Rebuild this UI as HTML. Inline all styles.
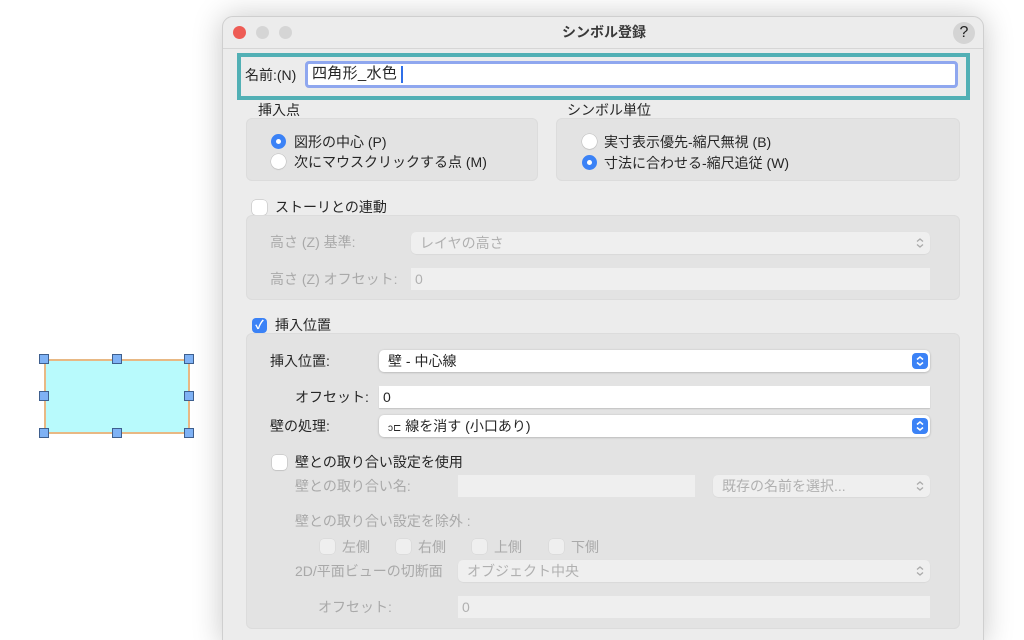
<!DOCTYPE html>
<html><head><meta charset="utf-8"><style>
*{box-sizing:border-box;margin:0;padding:0}
html,body{width:1024px;height:640px;overflow:hidden}
body{background:#fff;position:relative;font-family:"Liberation Sans","Noto Sans CJK JP",sans-serif;font-size:14px;color:#262626}
.a{position:absolute}
.win{left:222px;top:16px;width:762px;height:630px;background:#ececec;border:1px solid #cfcfcf;border-radius:11px 11px 0 0;box-shadow:0 0 30px rgba(0,0,0,.22)}
.t{position:absolute;white-space:nowrap;line-height:16px}
.g{color:#a9a9a9}
.box{position:absolute;background:#e3e3e3;border:1px solid #dcdcdc;border-radius:6px}
.fld{position:absolute;background:#fff;height:22px;box-shadow:0 1px 1px rgba(0,0,0,.15);padding-left:4px;line-height:22px}
.fld.d{background:#efefef;color:#b0b0b0;box-shadow:none}
.pop{position:absolute;background:#fff;height:22px;border-radius:5px;box-shadow:0 0.5px 2px rgba(0,0,0,.25);padding-left:9px;line-height:22px}
.pop.d{background:#efefef;color:#b0b0b0;box-shadow:0 0.5px 1px rgba(0,0,0,.08)}
.stp{position:absolute;right:2px;top:3px;width:16px;height:16px;border-radius:4px;background:#3b82f6}
.dstp{position:absolute;right:2px;top:3px;width:16px;height:16px}
.rad{position:absolute;width:15px;height:15px;border-radius:50%;background:#fff;box-shadow:0 0 0 .5px #bbb,0 1px 1px rgba(0,0,0,.1)}
.rad.on{background:#3b82f6;box-shadow:none}
.rad.on:after{content:"";position:absolute;left:5px;top:5px;width:5px;height:5px;border-radius:50%;background:#fff}
.cb{position:absolute;width:15px;height:15px;border-radius:4px;background:#fff;box-shadow:0 0 0 .5px #bbb,0 1px 1px rgba(0,0,0,.1)}
.cb.d{background:#efefef;box-shadow:0 0 0 .5px #d5d5d5}
.h{position:absolute;width:10px;height:10px;background:#7fb2f5;border:1px solid #3e5f8e}
</style></head><body>
<div class="a" style="left:44px;top:359px;width:146px;height:75px;background:#b8fafc;border:2px solid #e8b884"></div>
<div class="h" style="left:39px;top:354px"></div><div class="h" style="left:112px;top:354px"></div><div class="h" style="left:184px;top:354px"></div>
<div class="h" style="left:39px;top:391px"></div><div class="h" style="left:184px;top:391px"></div>
<div class="h" style="left:39px;top:428px"></div><div class="h" style="left:112px;top:428px"></div><div class="h" style="left:184px;top:428px"></div>

<div class="a win"></div>
<div class="a" style="left:223px;top:48px;width:760px;height:1px;background:#d6d6d6"></div>
<div class="a" style="left:233px;top:26px;width:13px;height:13px;border-radius:50%;background:#ee5c55"></div>
<div class="a" style="left:256px;top:26px;width:13px;height:13px;border-radius:50%;background:#d5d5d5"></div>
<div class="a" style="left:279px;top:26px;width:13px;height:13px;border-radius:50%;background:#d5d5d5"></div>
<div class="t" style="left:562px;top:24px;font-weight:bold;color:#3a3a3a">シンボル登録</div>
<div class="a" style="left:953px;top:22px;width:22px;height:22px;border-radius:50%;background:#d4d4d4;text-align:center;line-height:22px;font-size:16px;color:#222">?</div>

<div class="a" style="left:237px;top:53px;width:733px;height:47px;border:4px solid #52b0b5"></div>
<div class="t" style="left:245px;top:67px">名前:(N)</div>
<div class="a" style="left:305px;top:61px;width:653px;height:27px;border:3px solid #8fa7ef;border-radius:4px;background:#fff"></div>
<div class="t" style="left:312px;top:66px;font-size:15px;letter-spacing:0.3px">四角形_水色</div>
<div class="a" style="left:401px;top:66px;width:2px;height:17px;background:#2f6fe8"></div>

<div class="t" style="left:258px;top:102px">挿入点</div>
<div class="box" style="left:246px;top:118px;width:292px;height:63px"></div>
<div class="rad on" style="left:271px;top:134px"></div><div class="t" style="left:294px;top:134px">図形の中心 (P)</div>
<div class="rad" style="left:271px;top:154px"></div><div class="t" style="left:294px;top:154px">次にマウスクリックする点 (M)</div>
<div class="t" style="left:567px;top:102px">シンボル単位</div>
<div class="box" style="left:556px;top:118px;width:404px;height:63px"></div>
<div class="rad" style="left:582px;top:134px"></div><div class="t" style="left:604px;top:134px">実寸表示優先-縮尺無視 (B)</div>
<div class="rad on" style="left:582px;top:155px"></div><div class="t" style="left:604px;top:155px">寸法に合わせる-縮尺追従 (W)</div>

<div class="cb" style="left:252px;top:200px"></div><div class="t" style="left:275px;top:199px">ストーリとの連動</div>
<div class="box" style="left:246px;top:215px;width:714px;height:85px"></div>
<div class="t g" style="left:270px;top:234px">高さ (Z) 基準:</div>
<div class="pop d" style="left:411px;top:232px;width:519px">レイヤの高さ<svg class="dstp" viewBox="0 0 16 16"><path d="M5 6.5L8 4l3 2.5M5 9.5L8 12l3-2.5" stroke="#aaa" stroke-width="1.3" fill="none"/></svg></div>
<div class="t g" style="left:270px;top:271px">高さ (Z) オフセット:</div>
<div class="fld d" style="left:411px;top:268px;width:519px">0</div>

<div class="cb" style="left:252px;top:318px;background:#3b82f6;box-shadow:none;color:#fff;font-size:12px;text-align:center;line-height:15px;font-weight:bold">✓</div>
<div class="t" style="left:275px;top:317px">挿入位置</div>
<div class="box" style="left:246px;top:333px;width:714px;height:296px"></div>
<div class="t" style="left:270px;top:353px">挿入位置:</div>
<div class="pop" style="left:379px;top:350px;width:551px">壁 - 中心線<div class="stp"><svg width="16" height="16" viewBox="0 0 16 16"><path d="M5 6.5L8 4l3 2.5M5 9.5L8 12l3-2.5" stroke="#fff" stroke-width="1.5" fill="none"/></svg></div></div>
<div class="t" style="left:295px;top:389px">オフセット:</div>
<div class="fld" style="left:379px;top:386px;width:551px">0</div>
<div class="t" style="left:270px;top:418px">壁の処理:</div>
<div class="pop" style="left:379px;top:415px;width:551px"><span style="font-size:10px">ɔ⊏</span> 線を消す (小口あり)<div class="stp"><svg width="16" height="16" viewBox="0 0 16 16"><path d="M5 6.5L8 4l3 2.5M5 9.5L8 12l3-2.5" stroke="#fff" stroke-width="1.5" fill="none"/></svg></div></div>
<div class="cb" style="left:272px;top:455px"></div><div class="t" style="left:295px;top:454px">壁との取り合い設定を使用</div>
<div class="t g" style="left:295px;top:478px">壁との取り合い名:</div>
<div class="fld d" style="left:458px;top:475px;width:237px"></div>
<div class="pop d" style="left:713px;top:475px;width:217px">既存の名前を選択...<svg class="dstp" viewBox="0 0 16 16"><path d="M5 6.5L8 4l3 2.5M5 9.5L8 12l3-2.5" stroke="#aaa" stroke-width="1.3" fill="none"/></svg></div>
<div class="t g" style="left:295px;top:513px">壁との取り合い設定を除外 :</div>
<div class="cb d" style="left:320px;top:539px"></div><div class="t g" style="left:342px;top:539px">左側</div>
<div class="cb d" style="left:396px;top:539px"></div><div class="t g" style="left:418px;top:539px">右側</div>
<div class="cb d" style="left:472px;top:539px"></div><div class="t g" style="left:494px;top:539px">上側</div>
<div class="cb d" style="left:549px;top:539px"></div><div class="t g" style="left:571px;top:539px">下側</div>
<div class="t g" style="left:295px;top:563px">2D/平面ビューの切断面</div>
<div class="pop d" style="left:458px;top:560px;width:472px">オブジェクト中央<svg class="dstp" viewBox="0 0 16 16"><path d="M5 6.5L8 4l3 2.5M5 9.5L8 12l3-2.5" stroke="#aaa" stroke-width="1.3" fill="none"/></svg></div>
<div class="t g" style="left:318px;top:599px">オフセット:</div>
<div class="fld d" style="left:458px;top:596px;width:472px">0</div>
</body></html>
